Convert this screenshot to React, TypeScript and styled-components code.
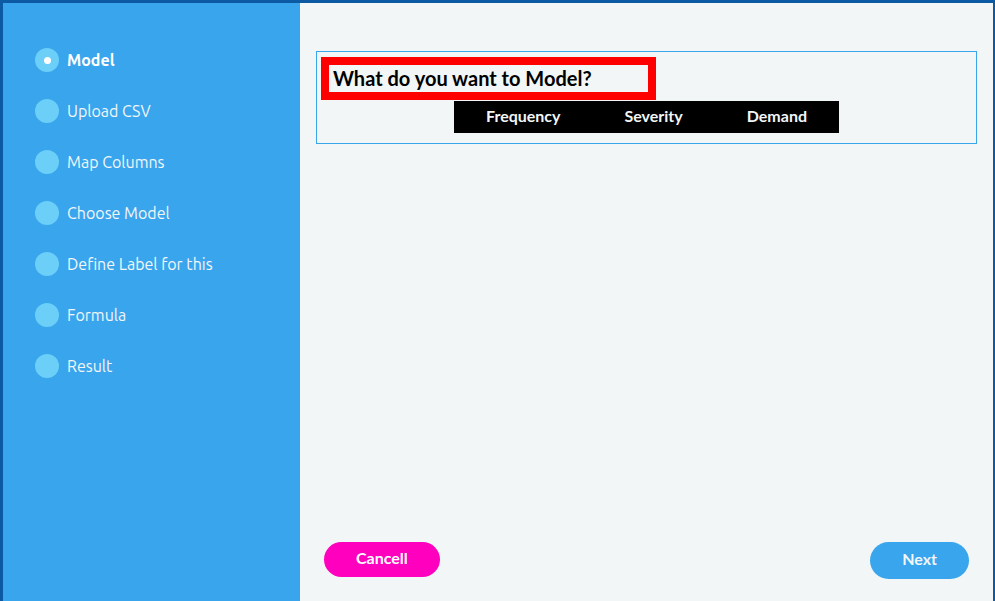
import React, { useState } from "react";
import styled, { createGlobalStyle } from "styled-components";

const GlobalStyle = createGlobalStyle`
  *, *::before, *::after { box-sizing: border-box; }
  body { margin: 0; font-family: Lato, "Liberation Sans", sans-serif; }
`;

const Page = styled.div`
  display: grid;
  grid-template-columns: 297px 1fr;
  min-height: 100vh;
  border: 3px solid #0c5aa4;
  border-right-width: 2px;
  border-bottom: 0;
  background: #f2f6f7;
`;

const Sidebar = styled.nav`
  padding: 45px 32px;
  background: #39a5ed;
`;

const Steps = styled.ol`
  display: flex;
  flex-direction: column;
  gap: 27px;
  margin: 0;
  padding: 0;
  list-style: none;
`;

const Step = styled.li<{ $active: boolean }>`
  display: flex;
  align-items: center;
  gap: 8px;
  height: 24px;
  color: ${(p) => (p.$active ? "#fff" : "#f2f6f7")};
  font: ${(p) => (p.$active ? 700 : 400)} 16px/24px Ubuntu, "Noto Sans", sans-serif;
`;

const Marker = styled.span<{ $active: boolean }>`
  display: grid;
  place-items: center;
  width: 24px;
  height: 24px;
  border-radius: 50%;
  background: #6bcff7;

  &::after {
    content: "";
    width: 7px;
    height: 7px;
    border-radius: 50%;
    background: ${(p) => (p.$active ? "#fff" : "transparent")};
  }
`;

const Main = styled.main`
  display: flex;
  flex-direction: column;
  justify-content: space-between;
  padding: 48px 16px 22px;
`;

const Panel = styled.section`
  padding: 5px 4px 10px;
  border: 1px solid #39a5ed;
`;

const Title = styled.h1`
  width: 335px;
  max-width: 100%;
  margin: 0;
  padding: 0 4px;
  border: 8px solid #f00;
  color: #000;
  font-size: 20px;
  font-weight: 700;
  line-height: 27px;
`;

const Options = styled.div`
  display: flex;
  width: fit-content;
  margin: 1px auto 0;
  background: #000;
`;

const Option = styled.button`
  padding: 0 32px 2px;
  border: 0;
  background: transparent;
  color: #f2f6f7;
  font: 700 16px/30px Lato, sans-serif;
  cursor: pointer;
`;

const Footer = styled.footer`
  display: flex;
  align-items: flex-start;
  justify-content: space-between;
  padding: 0 8px;
`;

const Action = styled.button<{ $primary?: boolean }>`
  height: ${(p) => (p.$primary ? 37 : 35)}px;
  padding: 0 32px 4px;
  border: 0;
  border-radius: 20px;
  background: ${(p) => (p.$primary ? "#39a5ed" : "#ff00bf")};
  color: ${(p) => (p.$primary ? "#f2f6f7" : "#fff")};
  font: 700 16px/24px Lato, sans-serif;
  cursor: pointer;
`;

const steps = ["Model", "Upload CSV", "Map Columns", "Choose Model", "Define Label for this", "Formula", "Result"];
const options = ["Frequency", "Severity", "Demand"];

export default function App() {
  const [current, setCurrent] = useState(0);
  return (
    <>
      <GlobalStyle />
      <Page>
        <Sidebar aria-label="Steps">
          <Steps>
            {steps.map((label, i) => (
              <Step key={label} $active={i === current} aria-current={i === current ? "step" : undefined}>
                <Marker $active={i === current} />
                {label}
              </Step>
            ))}
          </Steps>
        </Sidebar>
        <Main>
          <Panel>
            <Title>What do you want to Model?</Title>
            <Options>
              {options.map((label) => (
                <Option type="button" key={label}>{label}</Option>
              ))}
            </Options>
          </Panel>
          <Footer>
            <Action type="button" onClick={() => setCurrent(0)}>Cancell</Action>
            <Action type="button" $primary onClick={() => setCurrent(Math.min(current + 1, steps.length - 1))}>Next</Action>
          </Footer>
        </Main>
      </Page>
    </>
  );
}
